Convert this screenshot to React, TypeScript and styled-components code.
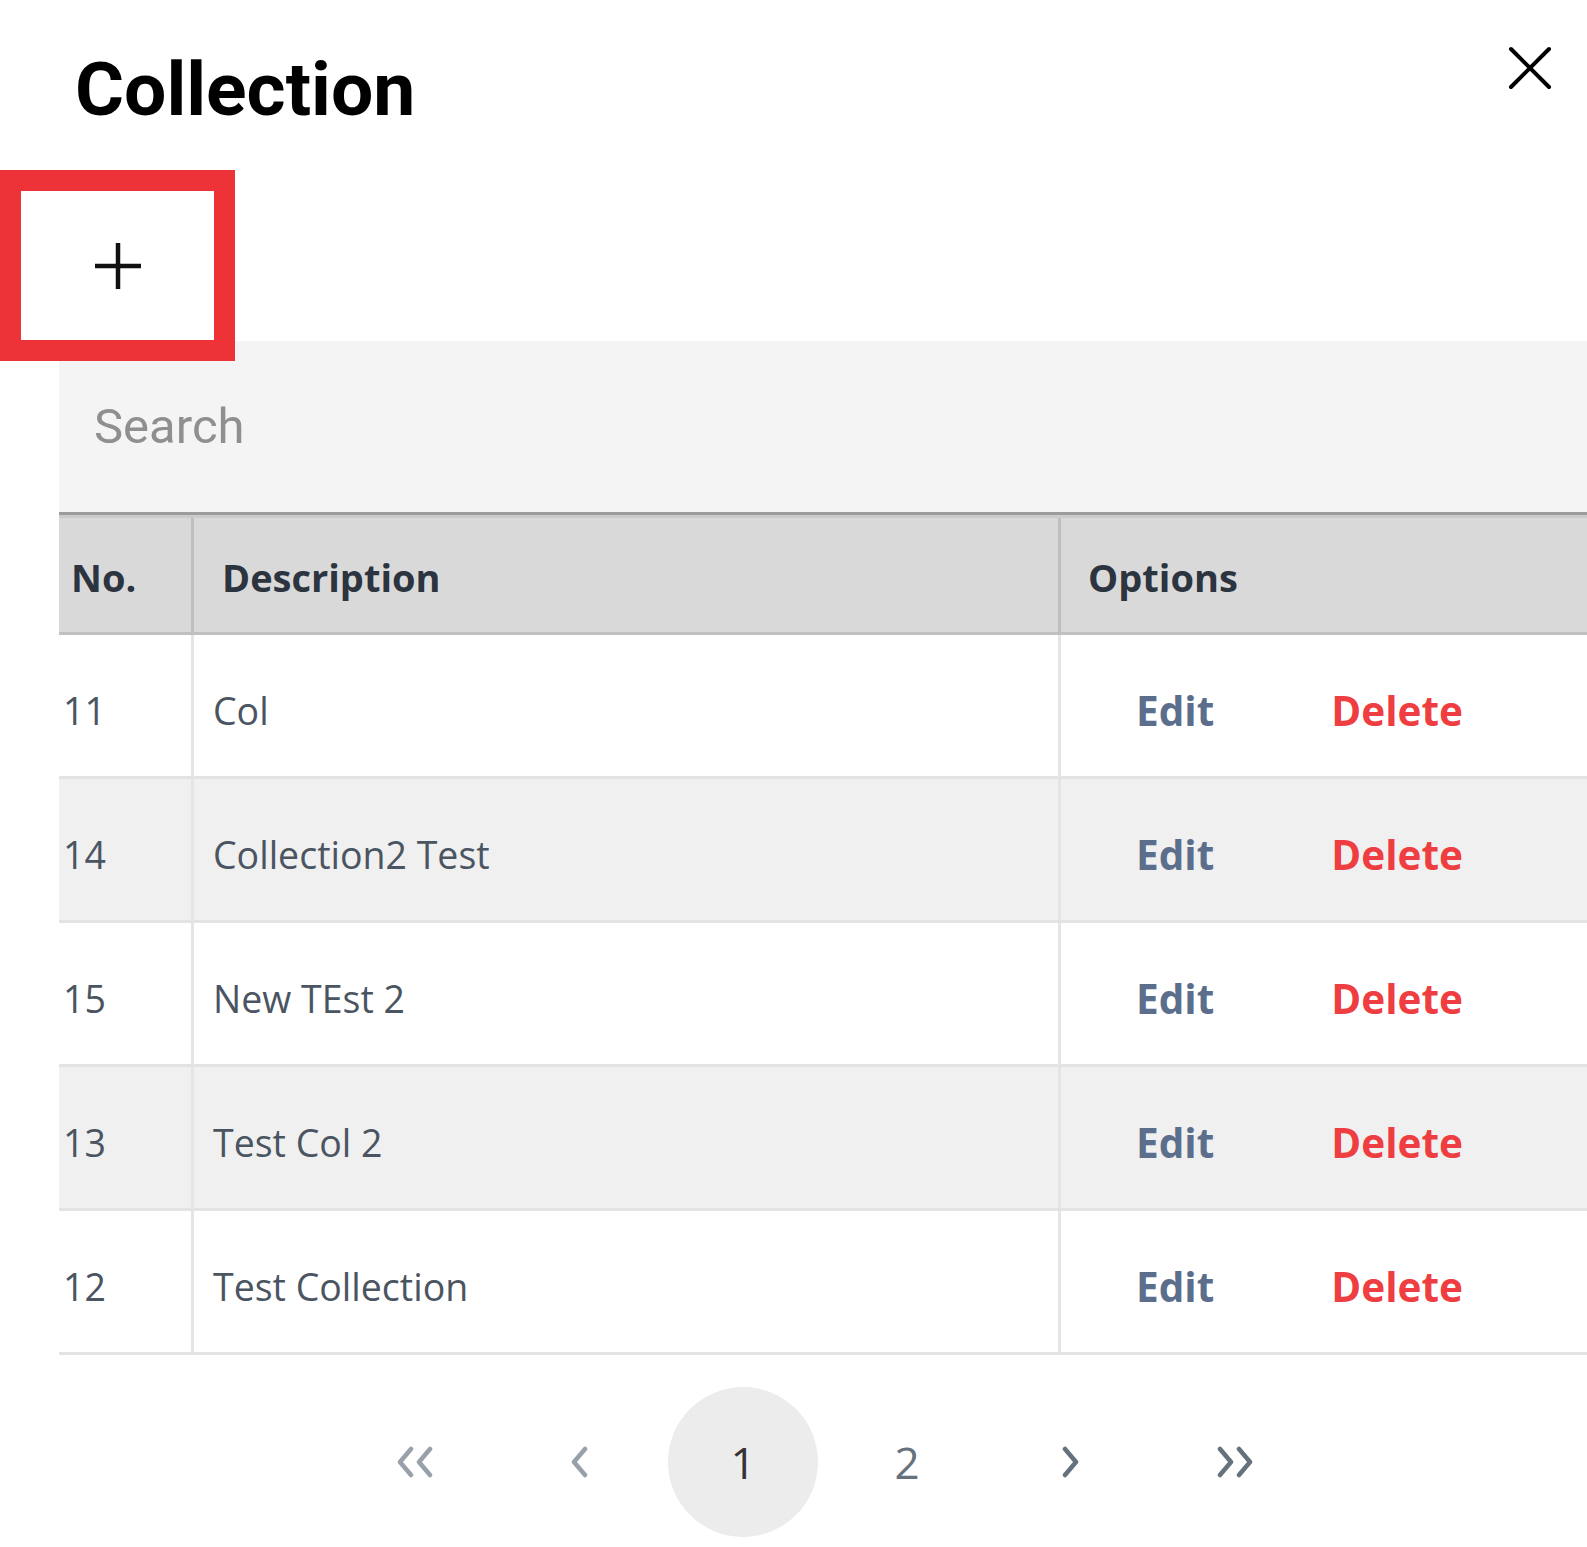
import React from "react";
import styled, { createGlobalStyle } from "styled-components";

const GlobalStyle = createGlobalStyle`
  html, body { margin: 0; padding: 0; background: #fff; }
  body { font-family: "Open Sans", "Noto Sans", sans-serif; overflow: hidden; }
  *, *::before, *::after { box-sizing: border-box; }
`;

const Page = styled.div`
  width: 1587px;
  height: 1547px;
  overflow: hidden;
  background: #fff;
`;

const TopBar = styled.header`
  display: flex;
  justify-content: space-between;
  align-items: flex-start;
  height: 170px;
  padding: 0 35px 0 75px;
`;

const Title = styled.h1`
  margin: 45px 0 0;
  font-family: Roboto, "Liberation Sans", sans-serif;
  font-weight: 700;
  font-size: 75px;
  line-height: normal;
  color: #000;
`;

const CloseButton = styled.button`
  margin-top: 46px;
  width: 44px;
  height: 44px;
  padding: 0;
  border: 0;
  background: none;
  display: flex;
  cursor: pointer;
`;

const AddButton = styled.button`
  position: relative;
  z-index: 1;
  display: flex;
  align-items: center;
  justify-content: center;
  width: 235px;
  height: 191px;
  margin: 0 0 -20px;
  padding: 0;
  border: 21px solid #ee3338;
  background: #fff;
  cursor: pointer;
`;

const Content = styled.main`
  padding-left: 59px;
`;

const SearchInput = styled.input`
  display: block;
  width: 100%;
  height: 174px;
  margin: 0;
  padding: 0 0 0 35px;
  border: 0;
  border-bottom: 3px solid #9c9c9c;
  background: #f4f4f4;
  font-family: Roboto, "Liberation Sans", sans-serif;
  font-size: 49px;
  color: #333;
  outline: none;
  &::placeholder {
    color: #8f8f8f;
  }
`;

const Table = styled.div`
  width: 100%;
  border-top: 3px solid #cbcbcb;
`;

const Row = styled.div<{ $head?: boolean; $alt?: boolean }>`
  display: grid;
  grid-template-columns: 135px 867px 1fr;
  height: ${(p) => (p.$head ? 117 : 144)}px;
  background: ${(p) => (p.$head ? "#d9d9d9" : p.$alt ? "#f0f0f0" : "#ffffff")};
  border-bottom: 3px solid ${(p) => (p.$head ? "#c0c0c0" : "#e3e3e3")};
`;

const HeadCell = styled.div<{ $pad: number; $last?: boolean }>`
  display: flex;
  align-items: center;
  padding: 4px 0 0 ${(p) => p.$pad}px;
  border-right: ${(p) => (p.$last ? "0" : "3px solid #bfbfbf")};
  font-size: 38px;
  font-weight: 700;
  color: #2c3440;
  white-space: nowrap;
`;

const Cell = styled.div<{ $pad: number; $last?: boolean }>`
  display: flex;
  align-items: center;
  padding: 9px 0 0 ${(p) => p.$pad}px;
  border-right: ${(p) => (p.$last ? "0" : "3px solid #e5e5e5")};
  font-size: 37.5px;
  color: #4b5562;
  white-space: nowrap;
`;

const Actions = styled(Cell)`
  gap: 117px;
`;

const ActionLink = styled.button<{ $danger?: boolean }>`
  padding: 0;
  border: 0;
  background: none;
  font-family: "Open Sans", "Noto Sans", sans-serif;
  font-size: 40.5px;
  font-weight: 700;
  color: ${(p) => (p.$danger ? "#ef3e42" : "#5b6e8c")};
  cursor: pointer;
`;

const Pagination = styled.nav`
  display: flex;
  justify-content: center;
  gap: 14px;
  margin-top: 32px;
  padding-left: 4px;
`;

const PageItem = styled.button<{ $active?: boolean; $dim?: boolean }>`
  display: flex;
  align-items: center;
  justify-content: center;
  width: 150px;
  height: 150px;
  padding: 0;
  border: 0;
  border-radius: 50%;
  background: ${(p) => (p.$active ? "#ececec" : "transparent")};
  font-family: "Open Sans", "Noto Sans", sans-serif;
  font-size: 44px;
  color: ${(p) => (p.$active ? "#333333" : p.$dim ? "#98a1a9" : "#65717c")};
  cursor: pointer;
`;

const Chevron = ({ double, right }: { double?: boolean; right?: boolean }) => {
  const w = double ? 40 : 20;
  return (
    <svg
      width={w}
      height={32}
      viewBox={`0 0 ${w} 32`}
      fill="none"
      stroke="currentColor"
      strokeWidth={4.5}
      strokeLinecap="round"
      strokeLinejoin="round"
      style={right ? { transform: "scaleX(-1)" } : undefined}
    >
      <polyline points="16,3 5,16 16,29" />
      {double && <polyline points="35,3 24,16 35,29" />}
    </svg>
  );
};

const rows = [
  { no: 11, desc: "Col" },
  { no: 14, desc: "Collection2 Test" },
  { no: 15, desc: "New TEst 2" },
  { no: 13, desc: "Test Col 2" },
  { no: 12, desc: "Test Collection" },
];

export default function App() {
  return (
    <Page>
      <GlobalStyle />
      <TopBar>
        <Title>Collection</Title>
        <CloseButton aria-label="Close">
          <svg width="44" height="44" viewBox="0 0 44 44" stroke="#000" strokeWidth="4" strokeLinecap="round">
            <line x1="3" y1="3" x2="41" y2="41" />
            <line x1="41" y1="3" x2="3" y2="41" />
          </svg>
        </CloseButton>
      </TopBar>
      <AddButton aria-label="Add">
        <svg width="46" height="46" viewBox="0 0 46 46" stroke="#111" strokeWidth="4.5">
          <line x1="0" y1="23" x2="46" y2="23" />
          <line x1="23" y1="0" x2="23" y2="46" />
        </svg>
      </AddButton>
      <Content>
        <SearchInput placeholder="Search" />
        <Table>
          <Row $head>
            <HeadCell $pad={12}>No.</HeadCell>
            <HeadCell $pad={28}>Description</HeadCell>
            <HeadCell $pad={27} $last>Options</HeadCell>
          </Row>
          {rows.map((r, i) => (
            <Row key={r.no} $alt={i % 2 === 1}>
              <Cell $pad={4}>{r.no}</Cell>
              <Cell $pad={19}>{r.desc}</Cell>
              <Actions $pad={75} $last>
                <ActionLink>Edit</ActionLink>
                <ActionLink $danger>Delete</ActionLink>
              </Actions>
            </Row>
          ))}
        </Table>
        <Pagination>
          <PageItem $dim aria-label="First"><Chevron double /></PageItem>
          <PageItem $dim aria-label="Previous"><Chevron /></PageItem>
          <PageItem $active>1</PageItem>
          <PageItem>2</PageItem>
          <PageItem aria-label="Next"><Chevron right /></PageItem>
          <PageItem aria-label="Last"><Chevron double right /></PageItem>
        </Pagination>
      </Content>
    </Page>
  );
}
